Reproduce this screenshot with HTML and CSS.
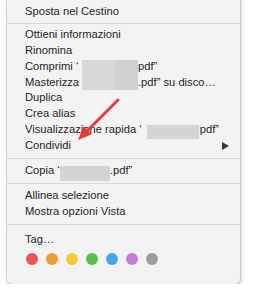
FILE: index.html
```html
<!DOCTYPE html>
<html lang="it">
<head>
<meta charset="utf-8">
<title>Menu contestuale</title>
<link rel="stylesheet" href="styles.css">
</head>
<body>
<div class="menu">
  <div class="sec sec-trash">
    <div class="item">Sposta nel Cestino</div>
  </div>
  <div class="sep"></div>
  <div class="sec sec-file">
    <div class="item">Ottieni informazioni</div>
    <div class="item">Rinomina</div>
    <div class="item">Comprimi ‘<span class="fn fn-comp">file.</span>pdf”</div>
    <div class="item">Masterizza<span class="fn fn-burn">“file</span>.pdf” su disco…</div>
    <div class="item">Duplica</div>
    <div class="item">Crea alias</div>
    <div class="item">Visualizzazione rapida ‘<span class="fn fn-view">file.</span>pdf”</div>
    <div class="item item-sub"><span>Condividi</span>
      <svg class="sub-arrow" width="7" height="8" viewBox="0 0 7 8"><polygon points="0,0 7,4 0,8" fill="#3a3a3a"/></svg>
    </div>
  </div>
  <div class="sep"></div>
  <div class="sec sec-copy">
    <div class="item">Copia ‘<span class="fn fn-copy">file</span>.pdf”</div>
  </div>
  <div class="sep"></div>
  <div class="sec sec-view">
    <div class="item">Allinea selezione</div>
    <div class="item">Mostra opzioni Vista</div>
  </div>
  <div class="sep"></div>
  <div class="sec sec-tags">
    <div class="item">Tag…</div>
    <div class="dots">
      <span class="dot dot-red"></span>
      <span class="dot dot-orange"></span>
      <span class="dot dot-yellow"></span>
      <span class="dot dot-green"></span>
      <span class="dot dot-blue"></span>
      <span class="dot dot-purple"></span>
      <span class="dot dot-gray"></span>
    </div>
  </div>

  <div class="redact redact-a"></div>
  <div class="redact redact-b"></div>
  <div class="redact redact-c"></div>

  <svg class="pointer" width="233" height="300" viewBox="0 0 233 300">
    <line x1="111" y1="106" x2="81.5" y2="135.5" stroke="#e63a33" stroke-width="3" stroke-linecap="round"/>
    <polygon points="71,146 85.1,140.3 76.7,131.9" fill="#e63a33"/>
  </svg>
</div>
</body>
</html>
```

FILE: styles.css
```css
html, body {
  margin: 0;
  padding: 0;
  background: #ffffff;
}

body {
  font-family: "Liberation Sans", Arial, sans-serif;
  font-size: 11.2px;
  color: #242424;
  overflow: hidden;
}

.menu {
  position: relative;
  margin: -6px 0 0 7px;
  width: 233px;
  background: #f3f3f3;
  border-radius: 0 0 5px 5px;
  box-shadow: 0 0 0 1px rgba(0, 0, 0, 0.1), 1px 2px 5px rgba(0, 0, 0, 0.22);
}

.sec-trash { padding: 10px 0 3.5px; }
.sec-file  { padding: 3px 0 4px; }
.sec-copy  { padding: 4px 0 5px; }
.sec-view  { padding: 4px 0 4px; }
.sec-tags  { padding: 7px 0 18.7px; }

.sep {
  height: 1px;
  background: #d9d9d9;
}

.item {
  height: 15.8px;
  line-height: 15.8px;
  padding: 0 11px 0 18px;
  white-space: nowrap;
}

.item-sub {
  display: flex;
  justify-content: space-between;
  align-items: center;
}

.sub-arrow {
  display: block;
}

.fn {
  display: inline-block;
  color: transparent;
  overflow: hidden;
  vertical-align: top;
}
.fn-comp { width: 59.5px; }
.fn-burn { width: 58.9px; }
.fn-view { width: 58px; }
.fn-copy { width: 50px; }

.dots {
  display: flex;
  gap: 8px;
  margin: 5.4px 0 0 19px;
}

.dot {
  width: 12px;
  height: 12px;
  border-radius: 50%;
}
.dot-red    { background: #ee5656; }
.dot-orange { background: #f09b3a; }
.dot-yellow { background: #f4c936; }
.dot-green  { background: #5cbf4c; }
.dot-blue   { background: #42a7ea; }
.dot-purple { background: #c27ddb; }
.dot-gray   { background: #9b9b9b; }

.redact {
  position: absolute;
  background: #d4d4d4;
}
.redact-a {
  left: 75px;
  top: 66px;
  width: 56px;
  height: 30px;
  background: linear-gradient(to right, #d7d7d7 0 59%, #d0d0d0 59% 100%);
}
.redact-b {
  left: 140px;
  top: 131px;
  width: 52px;
  height: 14px;
}
.redact-c {
  left: 53px;
  top: 172px;
  width: 50px;
  height: 15px;
}

.pointer {
  position: absolute;
  left: 0;
  top: 0;
  pointer-events: none;
}
```
